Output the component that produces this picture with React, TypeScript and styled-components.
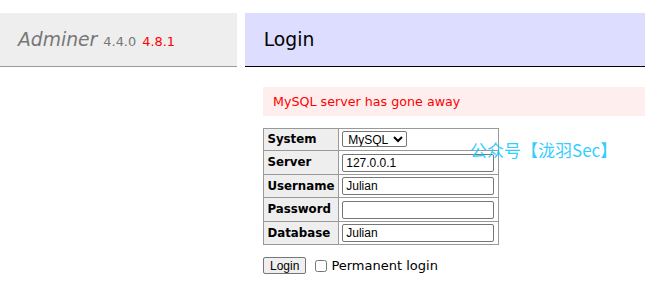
import { createGlobalStyle } from "styled-components";
import styled from "styled-components";

const GlobalStyle = createGlobalStyle`
  body {
    margin: 0;
    background: #fff;
    color: #000;
    font: 12.5px/1.25 "DejaVu Sans", Verdana, sans-serif;
  }
`;

const Page = styled.div`
  display: flex;
  align-items: flex-start;
  padding-top: 13px;
`;

const Menu = styled.div`
  width: 237px;
  flex-shrink: 0;
`;

const Title = styled.h1`
  margin: 0;
  padding: 15px 18px;
  font-size: 18.75px;
  font-weight: normal;
  color: #777;
  background: #eee;
  border-bottom: 1px solid #999;
  white-space: nowrap;
`;

const Brand = styled.a`
  color: #777;
  font-style: italic;
  text-decoration: none;
`;

const Version = styled.span<{ $new?: boolean }>`
  font-size: 69%;
  color: ${(p) => (p.$new ? "red" : "#777")};
`;

const Content = styled.div`
  flex: 1;
  min-width: 0;
  margin-left: 8px;
`;

const Heading = styled.h2`
  margin: 0 0 20px;
  padding: 15px 18.75px;
  font-size: 18.75px;
  font-weight: normal;
  background: #ddf;
  border-bottom: 1px solid #000;
`;

const Form = styled.form`
  position: relative;
  padding-left: 18px;
`;

const ErrorBox = styled.div`
  color: red;
  background: #fee;
  padding: 6.25px 10px;
  font-size: 12.7px;
`;

const Table = styled.table`
  margin-top: 12px;
  border-collapse: collapse;
  font-size: 11.25px;
`;

const Th = styled.th`
  border: 1px solid #999;
  padding: 2.25px 3.4px;
  background: #eee;
  text-align: left;
  font-size: 11.8px;
`;

const Td = styled.td`
  border: 1px solid #999;
  padding: 2.25px 3.4px;
`;

const Field = styled.input`
  box-sizing: border-box;
  width: 152px;
  height: 18px;
  margin: 0;
  padding: 1px 3px;
  font: 12px "Liberation Sans", Arial, sans-serif;
  border: 1px solid #767676;
  border-radius: 2px;
`;

const Select = styled.select`
  height: 16px;
  margin: 0;
  padding: 0 1px;
  font: 12px "Liberation Sans", Arial, sans-serif;
  border: 1px solid #767676;
  border-radius: 2px;
  background: #fff;
`;

const Actions = styled.p`
  margin: 12px 0 0;
  display: flex;
  align-items: center;
  gap: 9px;
`;

const Button = styled.button`
  height: 17px;
  padding: 0 6px;
  font: 12px "Liberation Sans", Arial, sans-serif;
  background: #efefef;
  border: 1px solid #767676;
  border-radius: 2px;
`;

const Label = styled.label`
  display: flex;
  align-items: center;
  gap: 4px;
  font-size: 13px;
`;

const Check = styled.input`
  width: 12px;
  height: 12px;
  margin: 0;
`;

const Watermark = styled.div`
  position: absolute;
  left: 225px;
  top: 50px;
  font: 17px "Noto Sans CJK SC", sans-serif;
  color: rgba(20, 200, 255, 0.9);
  white-space: nowrap;
  pointer-events: none;
`;

const rows = [
  { label: "Server", value: "127.0.0.1" },
  { label: "Username", value: "Julian" },
  { label: "Password", value: "", type: "password" },
  { label: "Database", value: "Julian" },
];

export default function App() {
  return (
    <>
      <GlobalStyle />
      <Page>
        <Menu>
          <Title>
            <Brand href="#">Adminer</Brand> <Version>4.4.0</Version>{" "}
            <Version $new>4.8.1</Version>
          </Title>
        </Menu>
        <Content>
          <Heading>Login</Heading>
          <Form onSubmit={(e) => e.preventDefault()}>
            <ErrorBox>MySQL server has gone away</ErrorBox>
            <Table>
              <tbody>
                <tr>
                  <Th>System</Th>
                  <Td>
                    <Select defaultValue="server">
                      <option value="server">MySQL</option>
                    </Select>
                  </Td>
                </tr>
                {rows.map((r) => (
                  <tr key={r.label}>
                    <Th>{r.label}</Th>
                    <Td>
                      <Field type={r.type || "text"} defaultValue={r.value} />
                    </Td>
                  </tr>
                ))}
              </tbody>
            </Table>
            <Actions>
              <Button type="submit">Login</Button>
              <Label>
                <Check type="checkbox" />
                Permanent login
              </Label>
            </Actions>
            <Watermark>公众号【泷羽Sec】</Watermark>
          </Form>
        </Content>
      </Page>
    </>
  );
}
